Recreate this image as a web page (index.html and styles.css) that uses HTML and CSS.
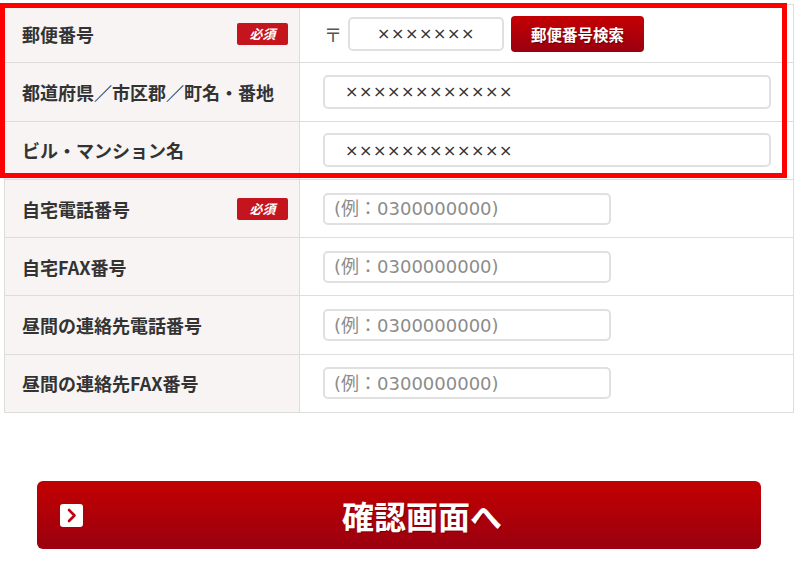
FILE: index.html
```html
<!DOCTYPE html>
<html lang="ja">
<head>
  <meta charset="UTF-8" />
  <meta name="viewport" content="width=device-width, initial-scale=1.0" />
  <title>お客様情報入力</title>
  <link rel="stylesheet" href="styles.css">
</head>
<body>
  <div class="page">
    <form class="form-table" autocomplete="off">
      <div class="row">
        <div class="th"><span>郵便番号</span><span class="req">必須</span></div>
        <div class="td">
          <span class="zip-mark">〒</span>
          <input class="input zip" type="text" value="×××××××" />
          <button class="zip-search" type="button">郵便番号検索</button>
        </div>
      </div>
      <div class="row">
        <div class="th"><span>都道府県／市区郡／町名・番地</span></div>
        <div class="td"><input class="input address" type="text" value="××××××××××××" /></div>
      </div>
      <div class="row">
        <div class="th"><span>ビル・マンション名</span></div>
        <div class="td"><input class="input address" type="text" value="××××××××××××" /></div>
      </div>
      <div class="row">
        <div class="th"><span>自宅電話番号</span><span class="req">必須</span></div>
        <div class="td"><input class="input tel" type="tel" placeholder="(例：0300000000)" /></div>
      </div>
      <div class="row">
        <div class="th"><span>自宅FAX番号</span></div>
        <div class="td"><input class="input tel" type="tel" placeholder="(例：0300000000)" /></div>
      </div>
      <div class="row">
        <div class="th"><span>昼間の連絡先電話番号</span></div>
        <div class="td"><input class="input tel" type="tel" placeholder="(例：0300000000)" /></div>
      </div>
      <div class="row">
        <div class="th"><span>昼間の連絡先FAX番号</span></div>
        <div class="td"><input class="input tel" type="tel" placeholder="(例：0300000000)" /></div>
      </div>
    </form>

    <!-- red frame around the address block -->
    <div class="highlight"></div>

    <div class="actions">
      <button class="confirm" type="button">
        <span class="confirm-icon">
          <svg width="23" height="23" viewBox="0 0 23 23">
            <polyline points="9,6 14.5,11.5 9,17" fill="none" stroke="#c00010" stroke-width="2.6" stroke-linecap="round" stroke-linejoin="round" />
          </svg>
        </span>
        <span class="confirm-text">確認画面へ</span>
      </button>
    </div>
  </div>
</body>
</html>
```

FILE: styles.css
```css
body {
  margin: 0;
  padding: 0;
  font-family: "DejaVu Sans", "Noto Sans CJK JP", sans-serif;
  color: #333;
  background: #fff;
}
.page {
  position: relative;
  padding: 4px 8px 0 4px;
}
.form-table {
  margin: 0;
  border: 1px solid #ddd;
}
.row {
  display: flex;
  height: 57.3px;
  border-top: 1px solid #ddd;
}
.row:first-child {
  border-top: none;
}
.th {
  box-sizing: border-box;
  width: 295px;
  flex-shrink: 0;
  display: flex;
  align-items: center;
  justify-content: space-between;
  padding: 0 11px 0 17px;
  background: #f7f4f3;
  border-right: 1px solid #ddd;
  font-family: "Noto Sans CJK JP", sans-serif;
  font-size: 18px;
  font-weight: bold;
  color: #333;
}
.req {
  display: inline-block;
  width: 51px;
  height: 22px;
  line-height: 22px;
  text-align: center;
  background: #c4141e;
  border-radius: 2px;
  color: #fff;
  font-size: 13px;
  font-style: italic;
  font-weight: bold;
}
.td {
  flex: 1;
  display: flex;
  align-items: center;
  padding-left: 23px;
}
.zip-mark {
  margin-left: 1px;
  font-family: "Noto Sans CJK JP", sans-serif;
  font-size: 18px;
  line-height: 1;
  color: #555;
}
.input {
  box-sizing: border-box;
  border: 2px solid #e0e0e0;
  border-radius: 5px;
  background: #fff;
  color: #333;
  font-family: "DejaVu Sans", "Noto Sans CJK JP", sans-serif;
  outline: none;
}
.input.zip,
.input.address {
  font-size: 16px;
  letter-spacing: 0.6px;
}
.input.zip {
  width: 156px;
  height: 34px;
  margin-left: 6px;
  text-align: center;
}
.input.address {
  width: 448px;
  height: 34px;
  padding-left: 20px;
}
.input.tel {
  width: 288px;
  height: 32px;
  padding-left: 9px;
  font-size: 18px;
}
.input.tel::placeholder {
  color: #8c8c8c;
}
.zip-search {
  width: 133px;
  height: 36px;
  margin-left: 7px;
  border: none;
  border-radius: 4px;
  background: linear-gradient(#c40003, #9a0010);
  color: #fff;
  font-family: "Noto Sans CJK JP", sans-serif;
  font-size: 15.5px;
  font-weight: bold;
  text-shadow: 1px 1px 1px rgba(0, 0, 0, 0.4);
  cursor: pointer;
}
.highlight {
  position: absolute;
  top: 3px;
  left: 0;
  width: 787px;
  height: 175px;
  box-sizing: border-box;
  border: 5px solid #ff0000;
  pointer-events: none;
}
.actions {
  padding: 68px 0 0 33px;
}
.confirm {
  display: flex;
  align-items: center;
  width: 724px;
  height: 68px;
  padding: 0;
  border: none;
  border-radius: 6px;
  background: linear-gradient(#c20002, #9a0010);
  cursor: pointer;
}
.confirm-icon {
  display: flex;
  width: 23px;
  height: 23px;
  margin-left: 23px;
  background: #fff;
  border-radius: 3px;
}
.confirm-text {
  flex: 1;
  text-align: center;
  color: #fff;
  font-family: "Noto Sans CJK JP", sans-serif;
  font-size: 32px;
  font-weight: bold;
  text-shadow: 1px 1px 0 rgba(0, 0, 0, 0.25);
}
```
